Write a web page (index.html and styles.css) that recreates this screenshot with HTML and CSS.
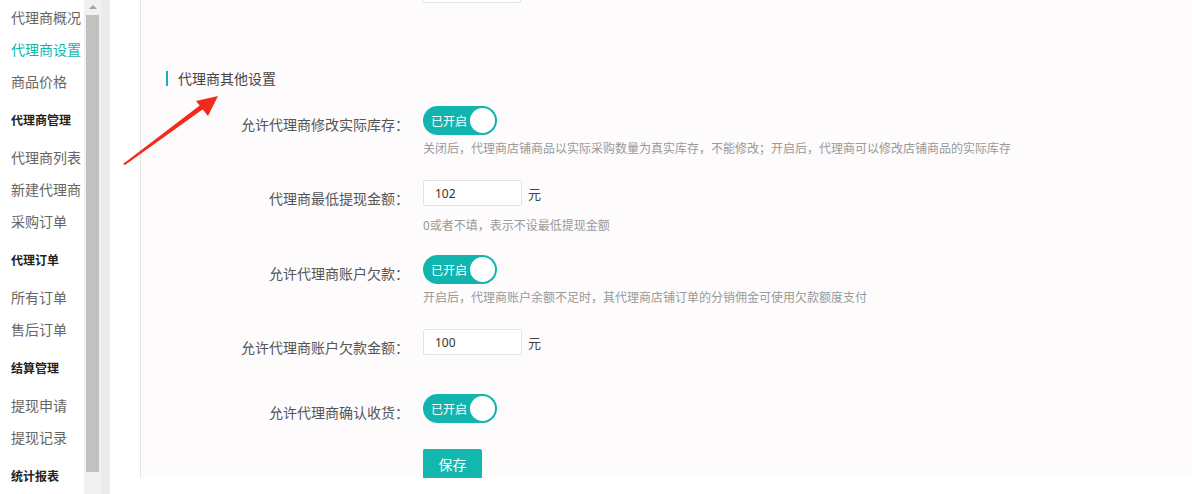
FILE: index.html
```html
<!DOCTYPE html>
<html lang="zh-CN">
<head>
  <meta charset="UTF-8">
  <title>代理商设置</title>
  <link rel="stylesheet" href="styles.css">
</head>
<body>
  <div class="page">

    <aside class="sidebar">
      <ul class="nav">
        <li class="nav-item">代理商概况</li>
        <li class="nav-item active">代理商设置</li>
        <li class="nav-item">商品价格</li>
        <li class="nav-head">代理商管理</li>
        <li class="nav-item">代理商列表</li>
        <li class="nav-item">新建代理商</li>
        <li class="nav-item">采购订单</li>
        <li class="nav-head">代理订单</li>
        <li class="nav-item">所有订单</li>
        <li class="nav-item">售后订单</li>
        <li class="nav-head">结算管理</li>
        <li class="nav-item">提现申请</li>
        <li class="nav-item">提现记录</li>
        <li class="nav-head">统计报表</li>
      </ul>
    </aside>

    <div class="scrollbar">
      <span class="scroll-up"></span>
      <span class="scroll-thumb"></span>
    </div>
    <div class="gutter"></div>
    <div class="spacer"></div>

    <main class="panel">
      <!-- previous block, scrolled out of view -->
      <div class="clipped">
        <input class="text-input" type="text" value="">
      </div>

      <h3 class="section-title">代理商其他设置</h3>

      <div class="form-row">
        <label class="form-label">允许代理商修改实际库存：</label>
        <div class="form-control">
          <div class="switch"><span>已开启</span><i class="knob"></i></div>
          <p class="help">关闭后，代理商店铺商品以实际采购数量为真实库存，不能修改；开启后，代理商可以修改店铺商品的实际库存</p>
        </div>
      </div>

      <div class="form-row compact">
        <label class="form-label">代理商最低提现金额：</label>
        <div class="form-control">
          <div class="input-line">
            <input class="text-input" type="text" value="102">
            <span class="unit">元</span>
          </div>
          <p class="help after-input">0或者不填，表示不设最低提现金额</p>
        </div>
      </div>

      <div class="form-row">
        <label class="form-label">允许代理商账户欠款：</label>
        <div class="form-control">
          <div class="switch"><span>已开启</span><i class="knob"></i></div>
          <p class="help">开启后，代理商账户余额不足时，其代理商店铺订单的分销佣金可使用欠款额度支付</p>
        </div>
      </div>

      <div class="form-row loose">
        <label class="form-label">允许代理商账户欠款金额：</label>
        <div class="form-control">
          <div class="input-line">
            <input class="text-input" type="text" value="100">
            <span class="unit">元</span>
          </div>
        </div>
      </div>

      <div class="form-row wide">
        <label class="form-label">允许代理商确认收货：</label>
        <div class="form-control">
          <div class="switch"><span>已开启</span><i class="knob"></i></div>
        </div>
      </div>

      <div class="form-row">
        <span class="form-label"></span>
        <div class="form-control">
          <button class="btn-save" type="button">保存</button>
        </div>
      </div>
    </main>

    <!-- red annotation arrow drawn over the page -->
    <svg class="annotation" viewBox="0 0 1192 494" xmlns="http://www.w3.org/2000/svg">
      <polygon points="123,164 125,165 206,107 203,103" fill="#f22a1c" />
      <polygon points="218,96 196,101 208,116" fill="#f22a1c" />
    </svg>

  </div>
</body>
</html>
```

FILE: styles.css
```css
* {
  box-sizing: border-box;
}

html,
body {
  margin: 0;
  padding: 0;
  background: #fff;
}

body {
  font-family: "Noto Sans CJK SC", "Noto Sans", sans-serif;
  color: #555;
  overflow: hidden;
}

.page {
  position: relative;
  display: flex;
  width: 1192px;
  height: 494px;
  overflow: hidden;
}

/* sidebar */
.sidebar {
  width: 84px;
  flex-shrink: 0;
  background: #fff;
  overflow: hidden;
}

.nav {
  list-style: none;
  margin: 0;
  padding: 1px 0 0 11px;
}

.nav-item {
  height: 32px;
  line-height: 32px;
  font-size: 14px;
  color: #666;
  white-space: nowrap;
}

.nav-item.active {
  color: #12b5ad;
}

.nav-head {
  height: 32px;
  line-height: 32px;
  margin: 7px 0 5px;
  font-size: 12px;
  font-weight: bold;
  color: #222;
  white-space: nowrap;
}

.scrollbar {
  width: 17px;
  flex-shrink: 0;
  background: #f1f1f1;
  display: flex;
  flex-direction: column;
  align-items: center;
}

.scroll-up {
  width: 0;
  height: 0;
  margin-top: 5px;
  border-left: 4px solid transparent;
  border-right: 4px solid transparent;
  border-bottom: 4px solid #a3a3a3;
}

.scroll-thumb {
  width: 13px;
  height: 457px;
  margin-top: 6px;
  background: #c1c1c1;
}

.gutter {
  width: 9px;
  flex-shrink: 0;
  background: #ebebeb;
}

.spacer {
  width: 30px;
  flex-shrink: 0;
  background: #fff;
}

/* main panel */
.panel {
  flex: 1;
  height: 478px;
  background: #fdfbfc;
  border-left: 1px solid #e6e6e6;
  overflow: hidden;
}

.clipped {
  height: 3px;
  overflow: hidden;
  display: flex;
  align-items: flex-end;
  padding-left: 281px;
}

.section-title {
  display: flex;
  align-items: center;
  margin: 65px 0 18px 25px;
  height: 20px;
  line-height: 20px;
  font-size: 14px;
  font-weight: normal;
  color: #444;
}

.section-title::before {
  content: "";
  width: 2px;
  height: 15px;
  margin-right: 10px;
  background: #12b5ad;
}

.form-row {
  display: flex;
  margin-bottom: 24px;
}

.form-row.compact {
  margin-bottom: 22px;
}

.form-row.loose {
  margin-bottom: 37px;
}

.form-row.wide {
  margin-bottom: 26px;
}

.form-label {
  width: 268px;
  flex-shrink: 0;
  padding-top: 8px;
  line-height: 20px;
  font-size: 14px;
  color: #555;
  text-align: right;
}

.form-control {
  margin-left: 14px;
}

.switch {
  display: flex;
  align-items: center;
  width: 74px;
  height: 29px;
  padding: 0 2px 0 8px;
  border-radius: 15px;
  background: #12b5ad;
  color: #fff;
  font-size: 12px;
}

.switch .knob {
  width: 25px;
  height: 25px;
  margin-left: auto;
  border-radius: 50%;
  background: #fff;
}

.help {
  margin: 4px 0 0;
  line-height: 17px;
  font-size: 12px;
  color: #999;
  white-space: nowrap;
}

.help.after-input {
  margin-top: 10px;
}

.input-line {
  display: flex;
  align-items: center;
}

.text-input {
  width: 99px;
  height: 26px;
  padding: 0 11px;
  border: 1px solid #e3e3e3;
  border-radius: 2px;
  background: #fff;
  font-family: "Noto Sans", "Noto Sans CJK SC", sans-serif;
  font-size: 12px;
  color: #333;
  outline: none;
}

.unit {
  margin-left: 6px;
  font-size: 13px;
  color: #444;
}

.btn-save {
  width: 59px;
  height: 30px;
  padding: 0;
  border: 0;
  border-radius: 2px;
  background: #12b7ae;
  color: #fff;
  font-family: "Noto Sans CJK SC", sans-serif;
  font-size: 14px;
  cursor: pointer;
}

.annotation {
  position: absolute;
  left: 0;
  top: 0;
  width: 1192px;
  height: 494px;
  pointer-events: none;
}
```
